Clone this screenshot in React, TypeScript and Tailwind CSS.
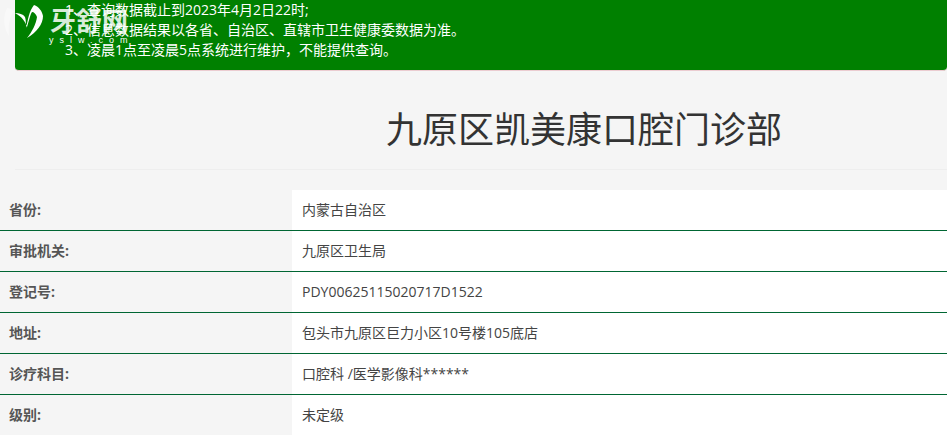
const rows = [
  { label: "省份:", value: "内蒙古自治区" },
  { label: "审批机关:", value: "九原区卫生局" },
  { label: "登记号:", value: "PDY00625115020717D1522" },
  { label: "地址:", value: "包头市九原区巨力小区10号楼105底店" },
  { label: "诊疗科目:", value: "口腔科 /医学影像科******" },
  { label: "级别:", value: "未定级" },
];

const fontStack = {
  fontFamily: '"Open Sans", "Noto Sans CJK SC", sans-serif',
};

const Logo = () => (
  <div className="absolute left-0 top-0 h-[50px] w-[135px] text-white">
    <svg width="50" height="42" viewBox="0 0 50 42" className="absolute left-0 top-0">
      <path
        d="M7 8 C3 16 3 27 9 36 C8 27 9 17 14 11 C12 9 9 8 7 8 Z"
        fill="#ffffff"
        fillOpacity="0.45"
      />
      <path
        d="M15 13 C19 13 23 14 25 17 C26 20 26 24 26 28 C28 20 29 11 34 5 C39 7 42 11 43 16 C43 24 37 32 27 38 C32 32 36 24 37 17 C36 14 34 12 32 12 C30 15 29 21 27 27 C25 21 22 17 15 13 Z"
        fill="#ffffff"
      />
    </svg>
    <span className="absolute left-[50px] top-[2px] text-[26px] leading-[36px] font-bold whitespace-nowrap [font-family:'Noto_Sans_CJK_SC',serif] opacity-85">
      牙舒网
    </span>
    <span className="absolute left-[49px] top-[35px] text-[9px] leading-[11px] tracking-[6px] whitespace-nowrap [font-family:'Liberation_Sans',sans-serif]">
      yslw.com
    </span>
  </div>
);

export default function App() {
  return (
    <div className="relative h-[435px] overflow-hidden bg-[#f5f5f5] text-[#333]" style={fontStack}>
      <Logo />
      <div className="ml-[15px] h-[71px] rounded-b-[4px] border-b border-[#ebccd1] bg-[#008000] pl-[50px] text-[14px] leading-[20px] text-white">
        <p>1、查询数据截止到2023年4月2日22时;</p>
        <p>2、信息数据结果以各省、自治区、直辖市卫生健康委数据为准。</p>
        <p>3、凌晨1点至凌晨5点系统进行维护，不能提供查询。</p>
      </div>

      <div className="ml-[15px] mt-[19px] h-[80px] border-b border-[#eeeeee] text-center">
        <h1 className="pl-[206px] text-[36px] leading-[80px] font-normal">九原区凯美康口腔门诊部</h1>
      </div>

      <div className="mt-[20px] text-[14px]">
        {rows.map((row, idx) => (
          <div
            key={row.label}
            className={`flex h-[41px] ${idx < rows.length - 1 ? "border-b border-[#006633]" : ""}`}
          >
            <div className="flex w-[292px] items-center pb-[2px] pl-[9px] font-bold text-[#555]">{row.label}</div>
            <div className="flex flex-1 items-center bg-white pb-[2px] pl-[10px] text-[#444]">{row.value}</div>
          </div>
        ))}
      </div>
    </div>
  );
}
